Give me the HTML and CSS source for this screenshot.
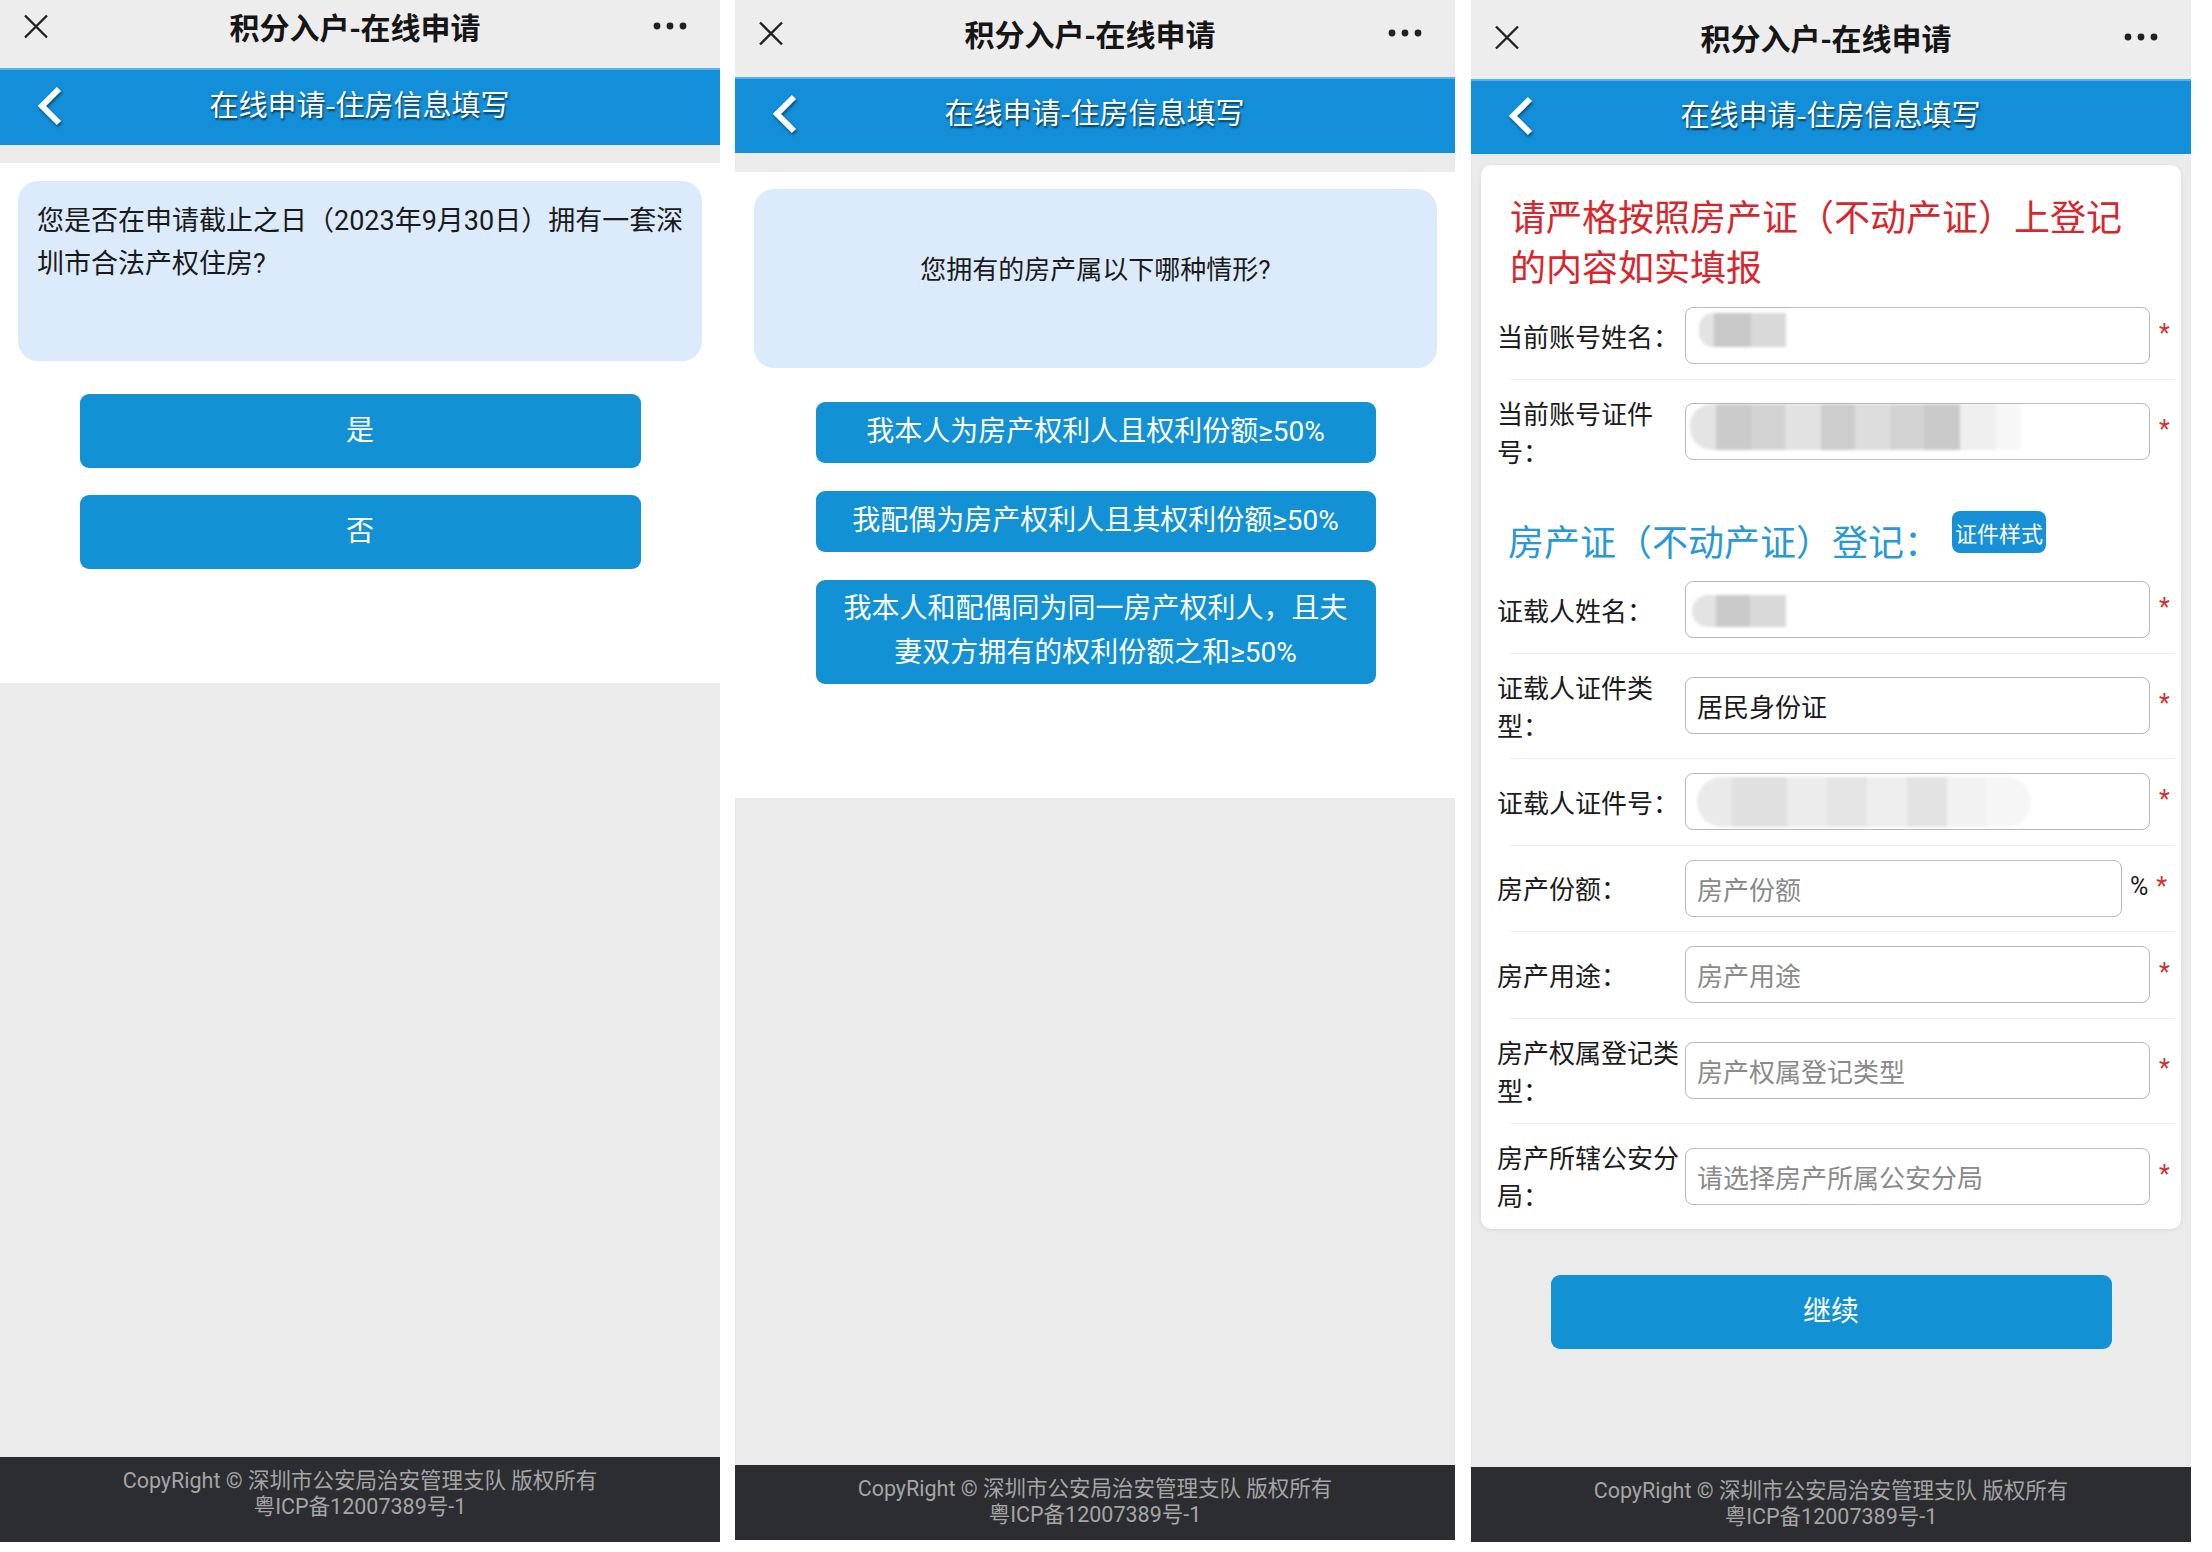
FILE: index.html
```html
<!DOCTYPE html>
<html lang="zh-CN">
<head>
<meta charset="utf-8">
<title>积分入户-在线申请</title>
<link rel="stylesheet" href="styles.css">
</head>
<body>
<div class="screens">

  <section class="phone phone--one">
    <header class="topbar">
      <svg class="topbar__close" width="26" height="25" viewBox="0 0 26 25"><path d="M2 1.5L24 23.5M24 1.5L2 23.5" stroke="#222" stroke-width="2.4" fill="none"/></svg>
      <div class="topbar__title">积分入户-在线申请</div>
      <svg class="topbar__more" width="34" height="8" viewBox="0 0 34 8"><circle cx="4" cy="4" r="3.4"/><circle cx="17" cy="4" r="3.4"/><circle cx="30" cy="4" r="3.4"/></svg>
    </header>
    <nav class="navbar">
      <svg class="navbar__back" width="30" height="40" viewBox="0 0 30 40"><path d="M25 3L8 20L25 37" stroke="#fff" stroke-width="6" fill="none"/></svg>
      <div class="navbar__title">在线申请-住房信息填写</div>
      <span></span>
    </nav>
    <div class="strip"></div>
    <main class="content">
      <div class="question latin">您是否在申请截止之日（2023年9月30日）拥有一套深圳市合法产权住房?</div>
      <div class="choices">
        <div class="choice">是</div>
        <div class="choice">否</div>
      </div>
    </main>
    <div class="filler"></div>
    <footer class="footer footer--tall latin">
      <div>CopyRight © 深圳市公安局治安管理支队 版权所有</div>
      <div>粤ICP备12007389号-1</div>
    </footer>
  </section>

  <section class="phone phone--two">
    <header class="topbar">
      <svg class="topbar__close" width="26" height="25" viewBox="0 0 26 25"><path d="M2 1.5L24 23.5M24 1.5L2 23.5" stroke="#222" stroke-width="2.4" fill="none"/></svg>
      <div class="topbar__title">积分入户-在线申请</div>
      <svg class="topbar__more" width="34" height="8" viewBox="0 0 34 8"><circle cx="4" cy="4" r="3.4"/><circle cx="17" cy="4" r="3.4"/><circle cx="30" cy="4" r="3.4"/></svg>
    </header>
    <nav class="navbar">
      <svg class="navbar__back" width="30" height="40" viewBox="0 0 30 40"><path d="M25 3L8 20L25 37" stroke="#fff" stroke-width="6" fill="none"/></svg>
      <div class="navbar__title">在线申请-住房信息填写</div>
      <span></span>
    </nav>
    <div class="strip strip--two"></div>
    <main class="content content--two">
      <div class="question question--center latin">您拥有的房产属以下哪种情形?</div>
      <div class="choices choices--compact latin">
        <div class="choice choice--single">我本人为房产权利人且权利份额≥50%</div>
        <div class="choice choice--single">我配偶为房产权利人且其权利份额≥50%</div>
        <div class="choice">我本人和配偶同为同一房产权利人，且夫妻双方拥有的权利份额之和≥50%</div>
      </div>
    </main>
    <div class="filler"></div>
    <footer class="footer latin">
      <div>CopyRight © 深圳市公安局治安管理支队 版权所有</div>
      <div>粤ICP备12007389号-1</div>
    </footer>
  </section>

  <section class="phone phone--three">
    <header class="topbar">
      <svg class="topbar__close" width="26" height="25" viewBox="0 0 26 25"><path d="M2 1.5L24 23.5M24 1.5L2 23.5" stroke="#222" stroke-width="2.4" fill="none"/></svg>
      <div class="topbar__title">积分入户-在线申请</div>
      <svg class="topbar__more" width="34" height="8" viewBox="0 0 34 8"><circle cx="4" cy="4" r="3.4"/><circle cx="17" cy="4" r="3.4"/><circle cx="30" cy="4" r="3.4"/></svg>
    </header>
    <nav class="navbar navbar--three">
      <svg class="navbar__back" width="30" height="40" viewBox="0 0 30 40"><path d="M25 3L8 20L25 37" stroke="#fff" stroke-width="6" fill="none"/></svg>
      <div class="navbar__title">在线申请-住房信息填写</div>
      <span></span>
    </nav>
    <div class="card">
      <div class="notice">请严格按照房产证（不动产证）上登记的内容如实填报</div>

      <div class="row">
        <div class="row__label">当前账号姓名：</div>
        <div class="field field--masked"><div class="mosaic mosaic--a"></div></div>
        <div class="req">*</div>
      </div>
      <div class="sep"></div>
      <div class="row">
        <div class="row__label">当前账号证件号：</div>
        <div class="field field--masked"><div class="mosaic mosaic--b"></div></div>
        <div class="req">*</div>
      </div>

      <div class="section">
        <div class="section__title">房产证（不动产证）登记：</div>
        <div class="section__badge">证件样式</div>
      </div>

      <div class="row">
        <div class="row__label">证载人姓名：</div>
        <div class="field field--masked"><div class="mosaic mosaic--c"></div></div>
        <div class="req">*</div>
      </div>
      <div class="sep"></div>
      <div class="row">
        <div class="row__label">证载人证件类型：</div>
        <div class="field">居民身份证</div>
        <div class="req">*</div>
      </div>
      <div class="sep"></div>
      <div class="row">
        <div class="row__label">证载人证件号：</div>
        <div class="field field--masked"><div class="mosaic mosaic--d"></div></div>
        <div class="req">*</div>
      </div>
      <div class="sep"></div>
      <div class="row">
        <div class="row__label">房产份额：</div>
        <div class="field field--placeholder field--short">房产份额</div>
        <div class="req req--wide"><span class="req__unit">%</span><span>*</span></div>
      </div>
      <div class="sep"></div>
      <div class="row">
        <div class="row__label">房产用途：</div>
        <div class="field field--placeholder">房产用途</div>
        <div class="req">*</div>
      </div>
      <div class="sep"></div>
      <div class="row">
        <div class="row__label">房产权属登记类型：</div>
        <div class="field field--placeholder">房产权属登记类型</div>
        <div class="req">*</div>
      </div>
      <div class="sep"></div>
      <div class="row">
        <div class="row__label">房产所辖公安分局：</div>
        <div class="field field--placeholder">请选择房产所属公安分局</div>
        <div class="req">*</div>
      </div>
    </div>
    <div class="continue">继续</div>
    <div class="filler"></div>
    <footer class="footer latin">
      <div>CopyRight © 深圳市公安局治安管理支队 版权所有</div>
      <div>粤ICP备12007389号-1</div>
    </footer>
  </section>

</div>
</body>
</html>
```

FILE: styles.css
```css
* { box-sizing: border-box; }

body {
  margin: 0;
  background: #ffffff;
  font-family: "Noto Sans CJK SC", "Noto Sans", sans-serif;
  color: #1a1a1a;
}

.latin {
  font-family: Roboto, "Noto Sans CJK SC", "Noto Sans", sans-serif;
}

.screens {
  display: flex;
  gap: 15px;
  width: 2212px;
  height: 1552px;
}

.phone {
  width: 720px;
  display: flex;
  flex-direction: column;
  background: #ebebeb;
  flex-shrink: 0;
}
.phone--one { height: 1542px; }
.phone--two { height: 1540px; }
.phone--three { height: 1542px; margin-left: 1px; }

/* top (browser) bar */
.topbar {
  display: grid;
  grid-template-columns: 1fr auto 1fr;
  align-items: center;
  align-content: end;
  background: #ededed;
  height: 68px;
  padding: 0 33px 22px 23px;
}
.phone--two .topbar { height: 77px; padding-bottom: 24px; }
.phone--three .topbar { height: 79px; padding-bottom: 22px; }

.topbar__close { justify-self: start; display: block; }
.topbar__more { justify-self: end; display: block; fill: #222; }
.topbar__title {
  font-size: 30px;
  font-weight: 600;
  line-height: 40px;
  color: #161616;
  white-space: nowrap;
}

/* blue nav bar */
.navbar {
  height: 77px;
  background: #138ed8;
  border-top: 2px solid #55b2ea;
  display: grid;
  grid-template-columns: 1fr auto 1fr;
  align-items: center;
  padding: 0 35px 10px 34px;
}
.phone--two .navbar { height: 76px; }
.navbar--three { height: 75px; }
.navbar__back {
  display: block;
  margin-top: 6px;
  filter: drop-shadow(1px 2px 1.5px rgba(0, 0, 0, 0.45));
}
.navbar__title {
  color: #ffffff;
  font-size: 29px;
  line-height: 40px;
  white-space: nowrap;
  text-shadow: 1px 2px 2px rgba(0, 0, 0, 0.6);
}

.strip { height: 18px; }
.strip--two { height: 19px; }

/* question pages */
.content {
  background: #ffffff;
  padding: 18px 18px 114px;
}
.content--two { padding: 17px 18px 114px 19px; }

.question {
  background: #dcebfb;
  border-radius: 20px;
  height: 180px;
  padding: 19px 14px 0 19px;
  font-size: 27px;
  line-height: 43px;
  color: #1a1a1a;
}
.question--center {
  height: 179px;
  width: 683px;
  padding: 0 0 16px;
  display: flex;
  align-items: center;
  justify-content: center;
  font-size: 26px;
}

.choices {
  display: flex;
  flex-direction: column;
  align-items: center;
  gap: 27px;
  margin-top: 33px;
}
.choices--compact {
  gap: 28px;
  margin-top: 34px;
}

.choice {
  width: 561px;
  min-height: 74px;
  background: #1291d4;
  color: #ffffff;
  border-radius: 9px;
  font-size: 28px;
  display: flex;
  align-items: center;
  justify-content: center;
  text-align: center;
  padding-bottom: 7px;
}
.choices--compact .choice {
  width: 560px;
  min-height: 61px;
  padding: 7px 26px 9px;
  line-height: 44px;
}
.choice--single { white-space: nowrap; }

.filler { flex: 1; }

/* footer */
.footer {
  height: 75px;
  flex-shrink: 0;
  background: #2b2d30;
  color: #a5a5a5;
  font-size: 21.5px;
  line-height: 26px;
  text-align: center;
  padding-top: 11px;
}
.footer--tall { height: 85px; }

/* form page */
.card {
  margin: 11px 10px 0;
  background: #ffffff;
  border-radius: 10px;
  box-shadow: 0 1px 4px rgba(0, 0, 0, 0.08);
}
.notice {
  color: #d8262c;
  font-size: 36px;
  line-height: 50px;
  margin: 25px 41px 3px 29px;
}

.row {
  display: flex;
  align-items: center;
  padding: 14px 6px 14.5px 16px;
}
.row__label {
  width: 188px;
  flex-shrink: 0;
  font-size: 26px;
  line-height: 38px;
  color: #1c1c1c;
}
.field {
  flex: 1;
  height: 57px;
  border: 1px solid #b8b8b8;
  border-radius: 8px;
  display: flex;
  align-items: center;
  padding: 0 11px;
  font-size: 26px;
  color: #1a1a1a;
  overflow: hidden;
}
.field--placeholder { color: #8a8a8a; }
.field--masked { padding: 0; align-items: flex-start; }

.req {
  width: 25px;
  height: 57px;
  line-height: 54px;
  padding-left: 9px;
  flex-shrink: 0;
  color: #d2302c;
  font-family: Roboto, sans-serif;
  font-size: 25px;
}
.req--wide {
  width: 53px;
  display: flex;
  align-items: flex-start;
  justify-content: space-between;
  padding: 0 8px 0 8px;
}
.req__unit {
  color: #1c1c1c;
  font-size: 25px;
  line-height: 54px;
}

.sep {
  height: 1px;
  background: #eeeeee;
  margin: 0 6px 0 29px;
}

.section {
  display: flex;
  align-items: flex-start;
  padding: 34px 0 5px 27px;
}
.section__title {
  font-size: 36px;
  line-height: 44px;
  color: #2899d6;
  white-space: nowrap;
}
.section__badge {
  margin: -7px 0 0 12px;
  height: 42px;
  line-height: 42px;
  padding: 0 3px;
  background: #1890d8;
  color: #ffffff;
  font-size: 22px;
  border-radius: 8px;
  white-space: nowrap;
}

/* privacy mosaics */
.mosaic { filter: blur(1.5px); }
.mosaic--a {
  width: 87px;
  height: 34px;
  margin: 5px 0 0 13px;
  border-radius: 14px 0 0 14px;
  background: linear-gradient(to right, #e3e3e3 0 15px, #c8c8c8 15px 52px, #d9d9d9 52px 87px);
}
.mosaic--b {
  width: 331px;
  height: 46px;
  margin: 0 0 0 4px;
  border-radius: 22px 0 0 22px;
  background: linear-gradient(to right,
    #e4e4e4 0 26px, #cbcbcb 26px 61px, #d2d2d2 61px 95px, #e2e2e2 95px 131px,
    #cccccc 131px 165px, #dddddd 165px 200px, #d3d3d3 200px 234px, #cacaca 234px 270px,
    #efefef 270px 306px, #f7f7f7 306px 331px);
}
.mosaic--c {
  width: 94px;
  height: 32px;
  margin: 13px 0 0 6px;
  border-radius: 16px 0 0 16px;
  background: linear-gradient(to right, #e3e3e3 0 24px, #cacaca 24px 58px, #d9d9d9 58px 94px);
}
.mosaic--d {
  width: 334px;
  height: 50px;
  margin: 3px 0 0 11px;
  border-radius: 25px;
  background: linear-gradient(to right,
    #eaeaea 0 35px, #e0e0e0 35px 90px, #ececec 90px 130px, #e5e5e5 130px 170px,
    #eeeeee 170px 210px, #e3e3e3 210px 250px, #f2f2f2 250px 290px, #f6f6f6 290px 334px);
}

.continue {
  margin: 46px auto 0;
  width: 561px;
  height: 74px;
  flex-shrink: 0;
  background: #1291d4;
  border-radius: 9px;
  color: #ffffff;
  font-size: 28px;
  display: flex;
  align-items: center;
  justify-content: center;
  padding-bottom: 6px;
}
```
